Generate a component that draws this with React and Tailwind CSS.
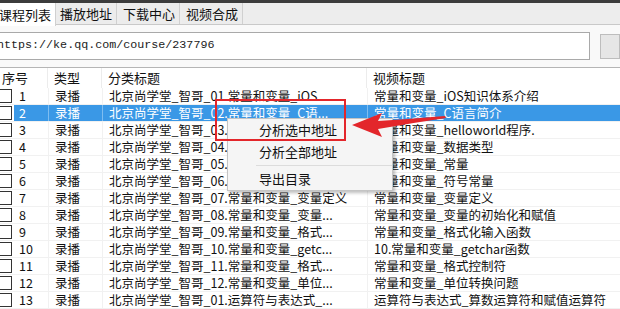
import React from "react";

const CJK = { fontFamily: '"Noto Sans CJK SC", "Liberation Sans", sans-serif' };

const TABS = ["课程列表", "播放地址", "下载中心", "视频合成"];

const ROWS = [
  ["北京尚学堂_智哥_01.常量和变量_iOS...", "常量和变量_iOS知识体系介绍"],
  ["北京尚学堂_智哥_02.常量和变量_C语...", "常量和变量_C语言简介"],
  ["北京尚学堂_智哥_03.常量和变量_hel...", "常量和变量_helloworld程序."],
  ["北京尚学堂_智哥_04.常量和变量_数据...", "常量和变量_数据类型"],
  ["北京尚学堂_智哥_05.常量和变量_常量", "常量和变量_常量"],
  ["北京尚学堂_智哥_06.常量和变量_符号...", "常量和变量_符号常量"],
  ["北京尚学堂_智哥_07.常量和变量_变量定义", "常量和变量_变量定义"],
  ["北京尚学堂_智哥_08.常量和变量_变量...", "常量和变量_变量的初始化和赋值"],
  ["北京尚学堂_智哥_09.常量和变量_格式...", "常量和变量_格式化输入函数"],
  ["北京尚学堂_智哥_10.常量和变量_getc...", "10.常量和变量_getchar函数"],
  ["北京尚学堂_智哥_11.常量和变量_格式...", "常量和变量_格式控制符"],
  ["北京尚学堂_智哥_12.常量和变量_单位...", "常量和变量_单位转换问题"],
  ["北京尚学堂_智哥_01.运算符与表达式_...", "运算符与表达式_算数运算符和赋值运算符"],
];

export default function App() {
  return (
    <div
      className="relative w-[620px] h-[309px] overflow-hidden bg-white text-[#111] text-[12.5px]"
      style={CJK}
    >
      {/* 顶部深色条 */}
      <div className="h-[3px] bg-[#3c3c3c]" />

      {/* tabs */}
      <div className="flex h-[22px] bg-[#ededed] border-b border-[#c9c9c9]">
        {TABS.map((t, i) => (
          <div
            key={t}
            className={`flex items-center text-[13px] leading-none border-r border-[#d0d0d0] ${
              i === 0
                ? "bg-white -ml-[2px] pl-[1px] pr-[4px] h-[23px]"
                : "bg-[#ececec] px-[4px] mr-[2px]"
            }`}
          >
            {t}
          </div>
        ))}
      </div>

      {/* 地址栏 */}
      <div className="flex items-center h-[42px] bg-[#f9f9f9]">
        <div className="flex items-center w-[594px] h-[28px] -ml-[1px] bg-white border border-[#a9a9a9]">
          <span
            className="text-[11.7px] text-[#222] -ml-[3px]"
            style={{ fontFamily: '"Liberation Mono", monospace' }}
          >
            https://ke.qq.com/course/237796
          </span>
        </div>
        <div className="ml-[10px] w-[20px] h-[25px] bg-[#e6e6e6] border border-[#bdbdbd]" />
      </div>

      {/* 表格 */}
      <div className="border-t border-[#b5b5b5]">
        <div className="flex h-[20px] items-center text-[13px]">
          <div className="w-[48px] pl-[2px] h-full flex items-center border-r border-[#ececec]">序号</div>
          <div className="w-[54px] pl-[6px] h-full flex items-center border-r border-[#ececec]">类型</div>
          <div className="w-[265px] pl-[6px] h-full flex items-center border-r border-[#ececec]">分类标题</div>
          <div className="flex-1 pl-[6px] h-full flex items-center">视频标题</div>
        </div>

        {ROWS.map(([cat, title], i) => {
          const sel = i === 1;
          return (
            <div key={i} className="flex h-[17px] items-center border-b border-[#f1f1f1]">
              <div className="w-[48px] h-full flex items-center">
                <div className="w-[14px] h-[14px] -ml-[2px] bg-white border border-[#333] shrink-0" />
                <div
                  className={`flex-1 h-full flex items-center pl-[5px] ml-[2px] ${
                    sel ? "bg-[#3a98e6] text-white" : ""
                  }`}
                >
                  {i + 1}
                </div>
              </div>
              <div
                className={`w-[54px] h-full flex items-center pl-[6px] border-l ${
                  sel ? "bg-[#3a98e6] text-white border-[#7fbdf0]" : "border-[#f1f1f1]"
                }`}
              >
                录播
              </div>
              <div
                className={`w-[265px] h-full flex items-center pl-[6px] whitespace-nowrap overflow-hidden border-l ${
                  sel ? "bg-[#3a98e6] text-white border-[#7fbdf0]" : "border-[#f1f1f1]"
                }`}
              >
                {cat}
              </div>
              <div
                className={`flex-1 h-full flex items-center pl-[6px] whitespace-nowrap overflow-hidden border-l ${
                  sel ? "bg-[#3a98e6] text-white border-[#7fbdf0]" : "border-[#f1f1f1]"
                }`}
              >
                {title}
              </div>
            </div>
          );
        })}
      </div>

      {/* 右键菜单 */}
      <div className="absolute left-[227px] top-[118px] w-[166px] bg-[#f5f5f5] border border-[#c4c4c4] shadow-[2px_2px_3px_rgba(0,0,0,0.25)] pb-[1px] text-[13px]">
        <div className="h-[22px] flex items-center pl-[31px]">分析选中地址</div>
        <div className="h-[22px] flex items-center pl-[31px]">分析全部地址</div>
        <div className="ml-[28px] my-[2px] border-t border-[#dcdcdc]" />
        <div className="h-[21px] flex items-center pl-[31px]">导出目录</div>
      </div>

      {/* 红框 */}
      <div className="absolute left-[215px] top-[99px] w-[131px] h-[42px] border-2 border-[#e3262b]" />

      {/* 红色箭头 */}
      <svg className="absolute left-0 top-0 pointer-events-none" width="620" height="309">
        <path
          d="M352 125 L382 113 L378 121 Q410 119 445 116 L446 118 Q412 123 378 129 L382 137 Z"
          fill="#e3262b"
        />
      </svg>
    </div>
  );
}
